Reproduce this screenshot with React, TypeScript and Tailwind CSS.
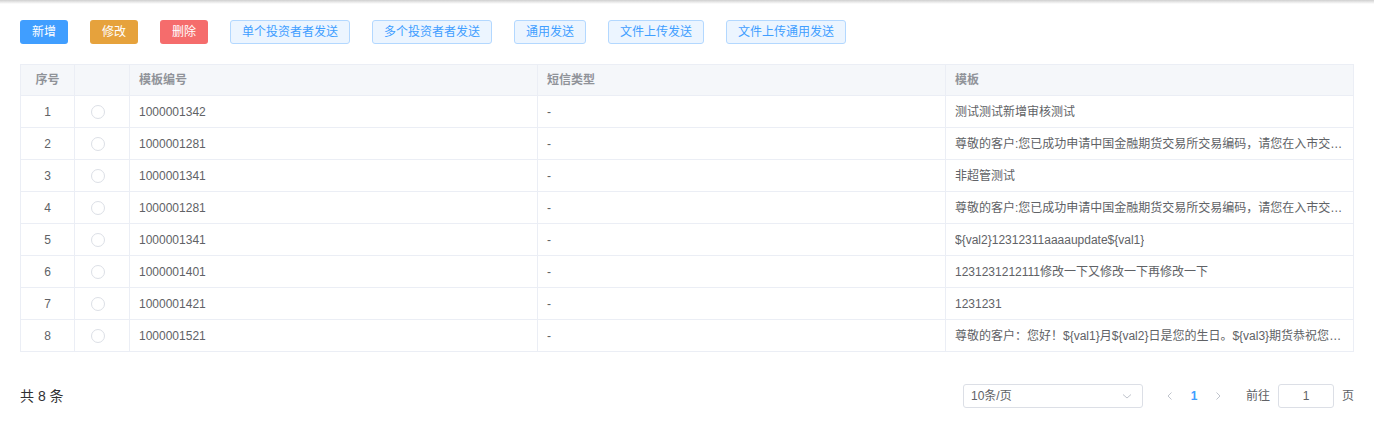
import React from "react";

const rows = [
  ["1", "1000001342", "-", "测试测试新增审核测试"],
  ["2", "1000001281", "-", "尊敬的客户:您已成功申请中国金融期货交易所交易编码，请您在入市交易前登录中国金融期货交易所网站查询"],
  ["3", "1000001341", "-", "非超管测试"],
  ["4", "1000001281", "-", "尊敬的客户:您已成功申请中国金融期货交易所交易编码，请您在入市交易前登录中国金融期货交易所网站查询"],
  ["5", "1000001341", "-", "${val2}12312311aaaaupdate${val1}"],
  ["6", "1000001401", "-", "1231231212111修改一下又修改一下再修改一下"],
  ["7", "1000001421", "-", "1231231"],
  ["8", "1000001521", "-", "尊敬的客户：您好！${val1}月${val2}日是您的生日。${val3}期货恭祝您生日快乐，身体健康，万事如意！"],
];

const plainBtns = ["单个投资者者发送", "多个投资者者发送", "通用发送", "文件上传发送", "文件上传通用发送"];

export default function App() {
  return (
    <div
      className="w-[1374px] h-[432px] bg-white relative overflow-hidden"
      style={{ fontFamily: '"Liberation Sans", "Noto Sans CJK SC", sans-serif' }}
    >
      <div className="h-[4px] bg-gradient-to-b from-[#cfcfcf] via-[#e8e8e8] to-white" />
      <div className="px-[20px] pt-[16px]">
        <div className="flex gap-[22px] h-[24px]">
          <button className="w-[48px] h-[24px] rounded-[3px] bg-[#409eff] text-white text-[12px] leading-none">新增</button>
          <button className="w-[48px] h-[24px] rounded-[3px] bg-[#e6a23c] text-white text-[12px] leading-none">修改</button>
          <button className="w-[48px] h-[24px] rounded-[3px] bg-[#f56c6c] text-white text-[12px] leading-none">删除</button>
          {plainBtns.map((b) => (
            <button
              key={b}
              className="h-[24px] px-[11px] rounded-[3px] bg-[#ecf5ff] border border-[#b3d8ff] text-[#409eff] text-[12px] leading-none"
            >
              {b}
            </button>
          ))}
        </div>

        <div className="mt-[20px] w-[1334px]">
          <div className="grid grid-cols-[55px_55px_408px_408px_408px] h-[32px] bg-[#f5f7fa] text-[12px] font-bold text-[#909399]">
            <div className="flex items-center justify-center border border-[#ebeef5]">序号</div>
            <div className="border-t border-r border-b border-[#ebeef5]" />
            <div className="flex items-center px-[9px] border-t border-r border-b border-[#ebeef5]">模板编号</div>
            <div className="flex items-center px-[9px] border-t border-r border-b border-[#ebeef5]">短信类型</div>
            <div className="flex items-center px-[9px] border-t border-r border-b border-[#ebeef5]">模板</div>
          </div>
          {rows.map((r, i) => (
            <div key={i} className="grid grid-cols-[55px_55px_408px_408px_408px] h-[32px] text-[12px] text-[#606266]">
              <div className="flex items-center justify-center border-l border-r border-b border-[#ebeef5]">{r[0]}</div>
              <div className="flex items-center pl-[16px] border-r border-b border-[#ebeef5]">
                <span className="w-[14px] h-[14px] rounded-full border border-[#dcdfe6] bg-white" />
              </div>
              <div className="flex items-center px-[9px] border-r border-b border-[#ebeef5]">{r[1]}</div>
              <div className="flex items-center px-[9px] border-r border-b border-[#ebeef5]">{r[2]}</div>
              <div className="flex items-center px-[9px] border-r border-b border-[#ebeef5] min-w-0">
                <span className="truncate">{r[3]}</span>
              </div>
            </div>
          ))}
        </div>

        <div className="mt-[32px] flex items-center h-[24px]">
          <div className="text-[14px] text-[#303133]">共 8 条</div>
          <div className="ml-auto flex items-center">
            <div className="w-[180px] h-[24px] border border-[#dcdfe6] rounded-[3px] flex items-center px-[7px] text-[12px] text-[#606266]">
              <span>10条/页</span>
              <svg className="ml-auto mr-[2px]" width="12" height="12" viewBox="0 0 12 12" fill="none">
                <path d="M2 4.5 L6 8 L10 4.5" stroke="#c0c4cc" strokeWidth="1" />
              </svg>
            </div>
            <div className="ml-[15px] w-[24px] flex justify-center">
              <svg width="10" height="10" viewBox="0 0 10 10" fill="none">
                <path d="M6.5 1.5 L3 5 L6.5 8.5" stroke="#c0c4cc" strokeWidth="1" />
              </svg>
            </div>
            <div className="w-[24px] text-center text-[12px] font-bold text-[#409eff]">1</div>
            <div className="w-[24px] flex justify-center">
              <svg width="10" height="10" viewBox="0 0 10 10" fill="none">
                <path d="M3.5 1.5 L7 5 L3.5 8.5" stroke="#c0c4cc" strokeWidth="1" />
              </svg>
            </div>
            <div className="ml-[16px] text-[12px] text-[#606266]">前往</div>
            <div className="ml-[8px] w-[56px] h-[24px] border border-[#dcdfe6] rounded-[3px] flex items-center justify-center text-[12px] text-[#606266]">1</div>
            <div className="ml-[8px] text-[12px] text-[#606266]">页</div>
          </div>
        </div>
      </div>
    </div>
  );
}
